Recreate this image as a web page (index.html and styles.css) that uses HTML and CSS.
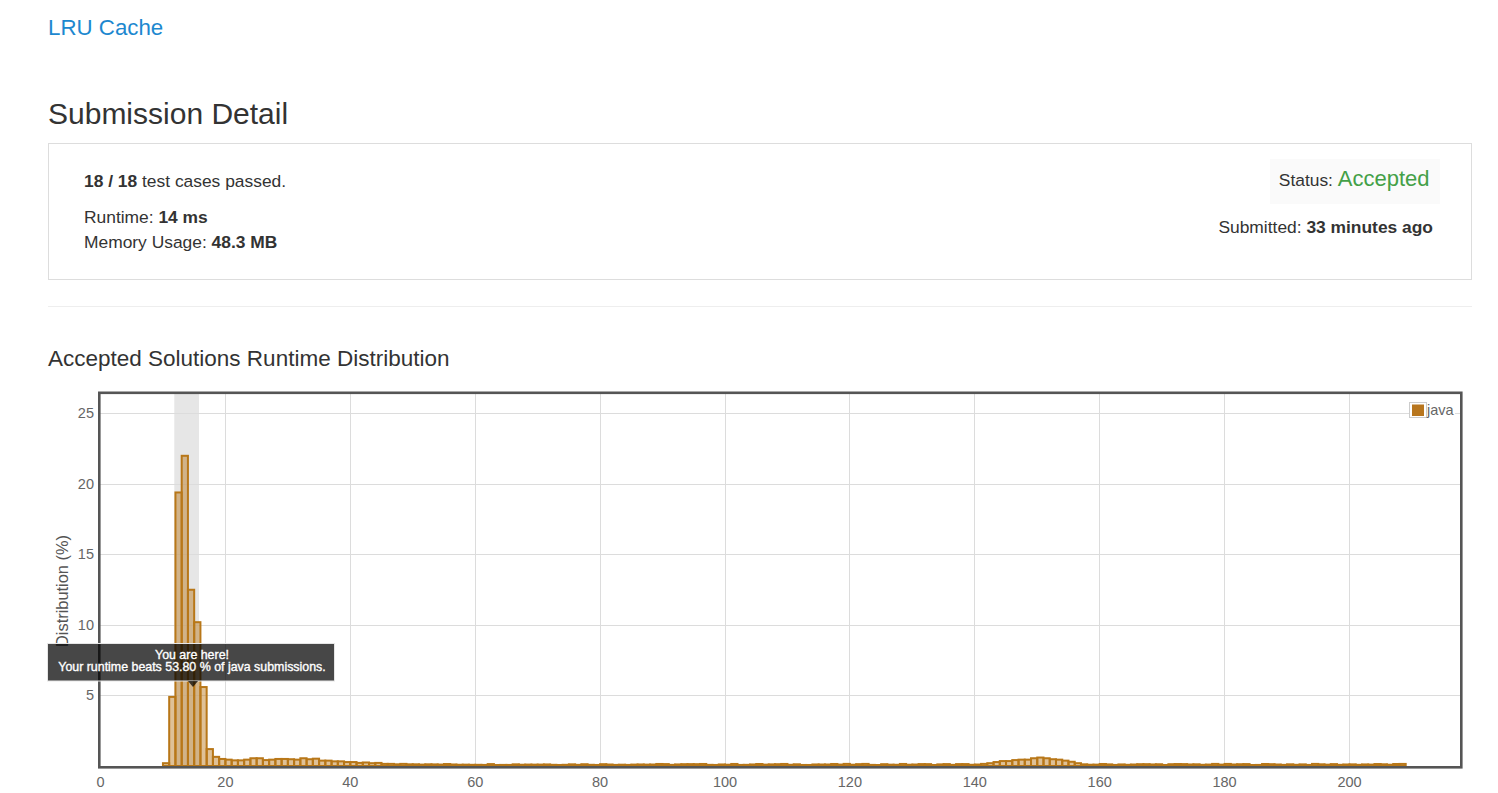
FILE: index.html
```html
<!DOCTYPE html>
<html lang="en">
<head>
<meta charset="utf-8">
<title>Submission Detail</title>
<link rel="stylesheet" href="styles.css">
</head>
<body>
<div class="page">
  <a class="problem-link" href="#">LRU Cache</a>
  <h1 class="page-title">Submission Detail</h1>
  <div class="card">
    <div class="card-left">
      <div class="passed"><strong>18 / 18</strong> test cases passed.</div>
      <div class="stats">
        <div class="stat">Runtime: <strong>14 ms</strong></div>
        <div class="stat">Memory Usage: <strong>48.3 MB</strong></div>
      </div>
    </div>
    <div class="card-right">
      <div class="status-box">Status: <span class="accepted">Accepted</span></div>
      <div class="submitted">Submitted: <strong>33 minutes ago</strong></div>
    </div>
  </div>
  <hr class="divider">
  <h3 class="chart-title">Accepted Solutions Runtime Distribution</h3>
  <div class="chart">
    <svg class="chart-svg" width="1432" height="408" viewBox="40 385 1432 408" xmlns="http://www.w3.org/2000/svg">
      <rect class="plot-bg" x="100" y="393" width="1361" height="374"/>
      <rect class="band" x="174.3" y="393" width="24.7" height="373"/>
      <g class="grid">
        <line x1="100" x2="1461" y1="413.5" y2="413.5"/>
        <line x1="100" x2="1461" y1="484.5" y2="484.5"/>
        <line x1="100" x2="1461" y1="554.5" y2="554.5"/>
        <line x1="100" x2="1461" y1="625.5" y2="625.5"/>
        <line x1="100" x2="1461" y1="695.5" y2="695.5"/>
        <line x1="225.5" x2="225.5" y1="393" y2="767"/>
        <line x1="350.5" x2="350.5" y1="393" y2="767"/>
        <line x1="475.5" x2="475.5" y1="393" y2="767"/>
        <line x1="600.5" x2="600.5" y1="393" y2="767"/>
        <line x1="725.5" x2="725.5" y1="393" y2="767"/>
        <line x1="849.5" x2="849.5" y1="393" y2="767"/>
        <line x1="974.5" x2="974.5" y1="393" y2="767"/>
        <line x1="1099.5" x2="1099.5" y1="393" y2="767"/>
        <line x1="1224.5" x2="1224.5" y1="393" y2="767"/>
        <line x1="1349.5" x2="1349.5" y1="393" y2="767"/>
      </g>
      <g id="bars" class="bars"></g>
      <rect class="frame" x="99.3" y="392.8" width="1362" height="374.5"/>
      <g class="ytick">
        <text x="94" y="418">25</text>
        <text x="94" y="489">20</text>
        <text x="94" y="559">15</text>
        <text x="94" y="630">10</text>
        <text x="94" y="700">5</text>
      </g>
      <g class="xtick">
        <text x="100.5" y="787">0</text>
        <text x="225.4" y="787">20</text>
        <text x="350.3" y="787">40</text>
        <text x="475.2" y="787">60</text>
        <text x="600.1" y="787">80</text>
        <text x="725" y="787">100</text>
        <text x="849.9" y="787">120</text>
        <text x="974.8" y="787">140</text>
        <text x="1099.7" y="787">160</text>
        <text x="1224.6" y="787">180</text>
        <text x="1349.5" y="787">200</text>
      </g>
      <text class="ytitle" transform="translate(68 591) rotate(-90)">Distribution (%)</text>
      <g class="legend">
        <rect class="legend-bg" x="1427" y="403" width="28" height="14"/>
        <rect class="legend-box" x="1409.5" y="402.5" width="17" height="15"/>
        <rect class="legend-swatch" x="1412" y="404.5" width="12" height="11.5"/>
        <text class="legend-text" x="1427" y="415">java</text>
      </g>
      <g class="tooltip">
        <rect class="tooltip-box" x="47.5" y="643.5" width="287" height="37.5"/>
        <polygon class="tooltip-arrow" points="188,681 198,681 193,687"/>
        <text class="tooltip-text" x="192" y="659">You are here!</text>
        <text class="tooltip-text" x="192" y="671">Your runtime beats 53.80 % of java submissions.</text>
      </g>
    </svg>
  </div>
</div>
<script src="script.js"></script>
</body>
</html>
```

FILE: styles.css
```css
html, body {
  overflow: hidden;
}
body {
  margin: 0;
  font-family: "Liberation Sans", Arial, sans-serif;
  color: #333;
  background: #fff;
}
.page {
  width: 1424px;
  margin-left: 48px;
}
.problem-link {
  display: block;
  padding-top: 16px;
  font-size: 22.3px;
  line-height: 24px;
  color: #1d88cf;
  text-decoration: none;
}
.page-title {
  margin: 57px 0 0;
  font-size: 30px;
  line-height: 33px;
  font-weight: normal;
  color: #333;
}
.card {
  margin-top: 13px;
  height: 137px;
  box-sizing: border-box;
  border: 1px solid #ddd;
  display: flex;
  justify-content: space-between;
  font-size: 17.4px;
}
.card-left {
  padding: 26.6px 0 0 35px;
}
.passed {
  line-height: 20px;
}
.stats {
  margin-top: 14px;
}
.stat {
  line-height: 25px;
}
.card-right {
  padding: 15px 31px 0 0;
  display: flex;
  flex-direction: column;
  align-items: flex-end;
}
.status-box {
  height: 45px;
  box-sizing: border-box;
  padding: 9px 10.5px 0 9px;
  background: #fafafa;
  line-height: 1;
}
.accepted {
  font-size: 22px;
  line-height: 1;
  color: #43a047;
}
.submitted {
  margin-top: 13px;
  margin-right: 7px;
  line-height: 20px;
}
.divider {
  margin: 26px 0 0;
  height: 0;
  border: 0;
  border-top: 1px solid #eee;
}
.chart-title {
  margin: 39px 0 0;
  font-size: 22.5px;
  line-height: 25px;
  font-weight: normal;
  color: #333;
}
.chart {
  margin: 14px 0 0 -8px;
  height: 408px;
}
.chart-svg {
  display: block;
}
.plot-bg {
  fill: #fff;
}
.band {
  fill: #e6e6e6;
}
.grid line {
  stroke: #dcdcdc;
  stroke-width: 1;
}
.bars rect {
  fill: rgba(184, 118, 24, 0.45);
  stroke: #b87718;
  stroke-width: 2;
}
.frame {
  fill: none;
  stroke: #555;
  stroke-width: 2.6;
}
.ytick text {
  font-family: "Liberation Sans", Arial, sans-serif;
  font-size: 14.5px;
  fill: #666;
  text-anchor: end;
}
.xtick text {
  font-family: "Liberation Sans", Arial, sans-serif;
  font-size: 14.5px;
  fill: #666;
  text-anchor: middle;
}
.ytitle {
  font-family: "Liberation Sans", Arial, sans-serif;
  font-size: 16.4px;
  fill: #555;
  text-anchor: middle;
}
.legend-bg {
  fill: #fff;
}
.legend-box {
  fill: #fff;
  stroke: #ccc;
  stroke-width: 1;
}
.legend-swatch {
  fill: #b8761e;
}
.legend-text {
  font-family: "Liberation Sans", Arial, sans-serif;
  font-size: 14.5px;
  fill: #666;
}
.tooltip-box {
  fill: rgba(0, 0, 0, 0.72);
  stroke: #e6e6e6;
  stroke-width: 1;
}
.tooltip-arrow {
  fill: rgba(0, 0, 0, 0.72);
}
.tooltip-text {
  font-family: "Liberation Sans", Arial, sans-serif;
  font-size: 12.4px;
  fill: #fff;
  stroke: #fff;
  stroke-width: 0.35;
  text-anchor: middle;
}
```

FILE: script.js
```js
(function () {
  var head = {
    10: 0.2, 11: 4.9, 12: 19.4, 13: 22.0, 14: 12.5, 15: 10.2, 16: 5.6, 17: 1.2,
    18: 0.65, 19: 0.5, 20: 0.45, 21: 0.4, 22: 0.4, 23: 0.45, 24: 0.55, 25: 0.55,
    26: 0.42, 27: 0.45, 28: 0.5, 29: 0.5, 30: 0.48, 31: 0.45, 32: 0.55, 33: 0.48,
    34: 0.52, 35: 0.38, 36: 0.38, 37: 0.33, 38: 0.33, 39: 0.28, 40: 0.28, 41: 0.22,
    42: 0.25, 43: 0.2, 44: 0.22, 45: 0.15, 46: 0.15, 47: 0.12, 48: 0.15, 49: 0.12,
    50: 0.12, 51: 0.1, 52: 0.12,
    141: 0.15, 142: 0.2, 143: 0.28, 144: 0.35, 145: 0.35, 146: 0.42, 147: 0.45,
    148: 0.45, 149: 0.55, 150: 0.6, 151: 0.55, 152: 0.48, 153: 0.45, 154: 0.38,
    155: 0.3, 156: 0.2, 157: 0.12
  };
  function noise(i) {
    var v = Math.sin(i * 12.9898) * 43758.5453;
    return v - Math.floor(v);
  }
  var g = document.getElementById('bars');
  var ns = 'http://www.w3.org/2000/svg';
  var x0 = 100.5, ux = 6.245, y0 = 766, uy = 14.1;
  for (var i = 10; i <= 208; i++) {
    var h = head.hasOwnProperty(i) ? head[i] : 0.07 + 0.08 * noise(i);
    var r = document.createElementNS(ns, 'rect');
    r.setAttribute('x', (x0 + i * ux).toFixed(2));
    r.setAttribute('width', ux.toFixed(3));
    r.setAttribute('y', (y0 - h * uy).toFixed(2));
    r.setAttribute('height', (h * uy).toFixed(2));
    g.appendChild(r);
  }
})();
```
